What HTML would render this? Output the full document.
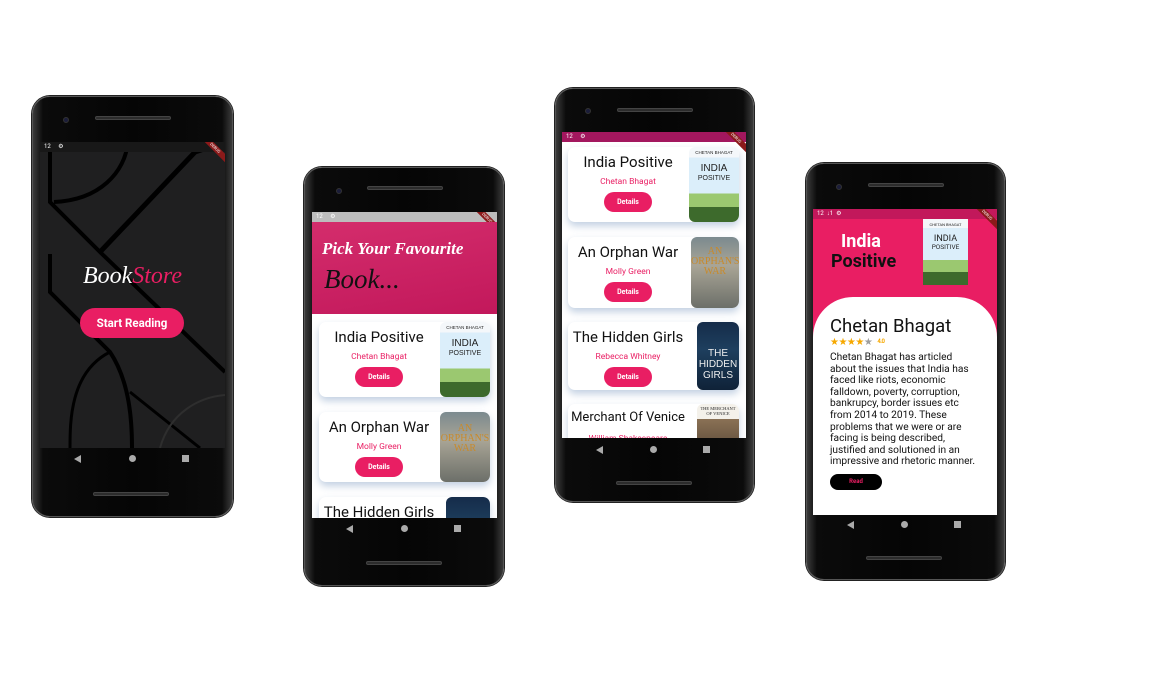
<!DOCTYPE html>
<html><head><meta charset="utf-8">
<style>
*{margin:0;padding:0;box-sizing:border-box}
body{width:1165px;height:675px;background:#fff;position:relative;overflow:hidden;font-family:"Roboto","Liberation Sans",sans-serif}
.ph{position:absolute;border-radius:18px;background:linear-gradient(90deg,#3a3a3a,#0b0b0b 5%,#050505 50%,#0b0b0b 95%,#3a3a3a);border:1.5px solid #555;box-shadow:0 0 0 1px #222}
.spk{position:absolute;height:4px;width:76px;border-radius:3px;background:#2c2c2c;border:1px solid #444}
.cam{position:absolute;width:6px;height:6px;border-radius:50%;background:#1b1d3a;border:1px solid #333}
.scr{position:absolute;overflow:hidden;background:#fff}
.sb{position:absolute;left:0;top:0;width:100%;height:10px;font-size:6px;color:#fff;padding-left:4px;line-height:10px}
.dbg{position:absolute;right:-9px;top:3px;width:38px;height:6px;background:#8b1a1a;color:#fff;font-size:4px;text-align:center;line-height:6px;transform:rotate(45deg)}
.tri{position:absolute;width:0;height:0;border-top:4px solid transparent;border-bottom:4px solid transparent;border-right:7px solid #aaa}
.dot{position:absolute;width:7px;height:7px;border-radius:50%;background:#aaa}
.sq{position:absolute;width:7px;height:7px;background:#aaa}
.card{position:absolute;left:7px;width:171px;background:#fff;border-radius:7px;box-shadow:0 4px 8px rgba(120,150,190,.45);overflow:hidden}
.card .t{position:absolute;left:0;width:120px;text-align:center;font-size:15px;color:#111;top:6px;white-space:nowrap}
.card .a{position:absolute;left:0;width:120px;text-align:center;font-size:8.5px;color:#e91e63;top:30px;white-space:nowrap}
.card .b{position:absolute;left:36px;width:48px;height:20px;border-radius:10px;background:#e91e63;color:#fff;font-size:7px;font-weight:bold;text-align:center;line-height:20px;top:45px}
.card .im{position:absolute;right:0;top:0;bottom:0;width:50px;border-radius:6px;overflow:hidden}
.ip{background:linear-gradient(#f4f7fa 0 14%,#dbeefa 14% 62%,#9bc870 62% 80%,#3d6a2c 80%)}
.ow{background:linear-gradient(#7b8a8f,#a9a596 40%,#6c6f69)}
.hg{background:linear-gradient(#152c4a,#1e3f5e 40%,#0f2238)}
.mv{background:linear-gradient(#f4f1ea 0 25%,#8a7155 25% ,#4a3b2e)}
.im span{position:absolute;left:0;width:100%;text-align:center;color:#222;font-family:"Liberation Sans",sans-serif}
</style></head><body>

<!-- Phone 1 -->
<div class="ph" style="left:32px;top:96px;width:201px;height:421px"></div>
<div class="spk" style="left:95px;top:116px"></div>
<div class="cam" style="left:63px;top:117px"></div>
<div class="spk" style="left:93px;top:492px"></div>
<div class="scr" style="left:40px;top:142px;width:185px;height:306px;background:#1f1f20">
<svg width="185" height="306" style="position:absolute;left:0;top:0">
<path d="M88 0 C85 30 60 58 14 60" stroke="#000" stroke-width="4" fill="none"/>
<path d="M10 0 L10 60 L60 110 L185 230" stroke="#000" stroke-width="4" fill="none"/>
<path d="M60 110 L155 10 L185 0" stroke="#000" stroke-width="5" fill="none"/>
<path d="M10 112 L10 150 L70 210 C90 240 92 280 92 306" stroke="#000" stroke-width="4" fill="none"/>
<path d="M70 210 C30 230 30 280 30 306" stroke="#000" stroke-width="3" fill="none"/>
<path d="M90 250 L160 306" stroke="#000" stroke-width="3" fill="none"/>
<path d="M120 306 C130 270 160 255 185 253" stroke="#2e2e2e" stroke-width="2" fill="none"/>
</svg>
<div class="sb" style="background:#181818">12 &nbsp;&nbsp;&nbsp;&nbsp;⚙</div>
<div class="dbg">DEBUG</div>
<div style="position:absolute;left:0;width:185px;top:121px;text-align:center;font-family:'Liberation Serif',serif;font-style:italic;font-size:24px;color:#fff">Book<span style="color:#e91e63">Store</span></div>
<div style="position:absolute;left:40px;top:166px;width:104px;height:30px;border-radius:15px;background:#e91e63;color:#fff;font-size:11.5px;font-weight:bold;text-align:center;line-height:30px">Start Reading</div>
</div>
<div class="tri" style="left:74px;top:455px"></div><div class="dot" style="left:129px;top:455px"></div><div class="sq" style="left:182px;top:455px"></div>

<!-- Phone 2 -->
<div class="ph" style="left:304px;top:167px;width:200px;height:419px"></div>
<div class="spk" style="left:367px;top:186px"></div>
<div class="cam" style="left:336px;top:188px"></div>
<div class="spk" style="left:366px;top:561px"></div>
<div class="scr" style="left:312px;top:212px;width:185px;height:306px">
<div class="sb" style="background:#bdbdbd">12 &nbsp;&nbsp;&nbsp;&nbsp;⚙</div>
<div class="dbg">DEBUG</div>
<div style="position:absolute;left:0;top:10px;width:185px;height:92px;background:linear-gradient(170deg,#d42d6c,#c2185b)"></div>
<div style="position:absolute;left:10px;top:27px;font-family:'Liberation Serif',serif;font-style:italic;font-weight:bold;font-size:17px;color:#fff">Pick Your Favourite</div>
<div style="position:absolute;left:12px;top:52px;font-family:'Liberation Serif',serif;font-style:italic;font-size:27px;color:#111">Book...</div>
<div class="card" style="top:110px;height:75px"><div class="t">India Positive</div><div class="a">Chetan Bhagat</div><div class="b">Details</div><div class="im ip"><span style="top:3px;font-size:4.5px">CHETAN BHAGAT</span><span style="top:17px;font-size:10px;line-height:9px">INDIA<br><span style="font-size:7px;position:static">POSITIVE</span></span></div></div>
<div class="card" style="top:200px;height:70px"><div class="t">An Orphan War</div><div class="a">Molly Green</div><div class="b">Details</div><div class="im ow"><span style="top:12px;font-size:10px;color:#c98a2a;font-family:'Liberation Serif',serif;line-height:10px">AN<br>ORPHAN'S<br>WAR</span></div></div>
<div class="card" style="top:285px;height:70px"><div class="t">The Hidden Girls</div><div class="im hg" style="width:44px"></div></div>
</div>
<div class="tri" style="left:346px;top:525px"></div><div class="dot" style="left:401px;top:525px"></div><div class="sq" style="left:454px;top:525px"></div>

<!-- Phone 3 -->
<div class="ph" style="left:555px;top:88px;width:199px;height:414px"></div>
<div class="spk" style="left:617px;top:108px"></div>
<div class="cam" style="left:585px;top:108px"></div>
<div class="spk" style="left:616px;top:481px"></div>
<div class="scr" style="left:562px;top:132px;width:184px;height:306px">
<div class="sb" style="background:#a3175e">12 &nbsp;&nbsp;&nbsp;&nbsp;⚙</div>
<div class="dbg">DEBUG</div>
<div class="card" style="top:15px;height:75px;left:6px"><div class="t">India Positive</div><div class="a">Chetan Bhagat</div><div class="b">Details</div><div class="im ip"><span style="top:3px;font-size:4.5px">CHETAN BHAGAT</span><span style="top:17px;font-size:10px;line-height:9px">INDIA<br><span style="font-size:7px;position:static">POSITIVE</span></span></div></div>
<div class="card" style="top:105px;height:71px;left:6px"><div class="t">An Orphan War</div><div class="a">Molly Green</div><div class="b">Details</div><div class="im ow" style="width:48px"><span style="top:10px;font-size:10px;color:#c98a2a;font-family:'Liberation Serif',serif;line-height:10px">AN<br>ORPHAN'S<br>WAR</span></div></div>
<div class="card" style="top:190px;height:68px;left:6px"><div class="t">The Hidden Girls</div><div class="a">Rebecca Whitney</div><div class="b">Details</div><div class="im hg" style="width:42px"><span style="top:26px;font-size:10px;color:#eee;line-height:11px">THE<br>HIDDEN<br>GIRLS</span></div></div>
<div class="card" style="top:272px;height:60px;left:6px"><div class="t" style="font-size:13px">Merchant Of Venice</div><div class="a">William Shakespeare</div><div class="im mv" style="width:42px"><span style="top:2px;font-size:4.5px;font-family:'Liberation Serif',serif">THE MERCHANT<br>OF VENICE</span></div></div>
</div>
<div class="tri" style="left:596px;top:446px"></div><div class="dot" style="left:650px;top:446px"></div><div class="sq" style="left:703px;top:446px"></div>

<!-- Phone 4 -->
<div class="ph" style="left:806px;top:163px;width:199px;height:417px"></div>
<div class="spk" style="left:868px;top:183px"></div>
<div class="cam" style="left:836px;top:184px"></div>
<div class="spk" style="left:866px;top:556px"></div>
<div class="scr" style="left:813px;top:209px;width:184px;height:306px;background:#e91e63">
<div class="sb" style="background:#c2185b">12 &nbsp;↓1&nbsp;&nbsp;⚙</div>
<div class="dbg">DEBUG</div>
<div style="position:absolute;left:28px;top:22px;font-size:18px;font-weight:bold;color:#fff">India</div>
<div style="position:absolute;left:18px;top:42px;font-size:18px;font-weight:bold;color:#111">Positive</div>
<div class="ip" style="position:absolute;left:110px;top:10px;width:45px;height:66px"><span style="position:absolute;top:3px;width:100%;text-align:center;font-size:4px;color:#222">CHETAN BHAGAT</span><span style="position:absolute;top:16px;width:100%;text-align:center;font-size:9px;line-height:8px;color:#222">INDIA<br><span style="font-size:6.5px">POSITIVE</span></span></div>
<div style="position:absolute;left:0;top:88px;width:184px;height:230px;background:#fff;border-radius:40px 40px 0 0"></div>
<div style="position:absolute;left:17px;top:106px;font-size:18.5px;color:#111">Chetan Bhagat</div>
<div style="position:absolute;left:17px;top:128px;font-size:10px;line-height:10px;color:#f6a800;letter-spacing:-0.5px">★★★★<span style="color:#9e9e9e">★</span> <span style="font-size:6px;font-weight:bold;margin-left:3px;vertical-align:2px">4.0</span></div>
<div style="position:absolute;left:17px;top:143px;width:148px;font-size:10.2px;line-height:11.6px;color:#111">Chetan Bhagat has articled about the issues that India has faced like riots, economic falldown, poverty, corruption, bankrupcy, border issues etc from 2014 to 2019. These problems that we were or are facing is being described, justified and solutioned in an impressive and rhetoric manner.</div>
<div style="position:absolute;left:17px;top:265px;width:52px;height:16px;border-radius:8px;background:#000;color:#e91e63;font-size:6px;font-weight:bold;text-align:center;line-height:16px">Read</div>
</div>
<div class="tri" style="left:847px;top:521px"></div><div class="dot" style="left:901px;top:521px"></div><div class="sq" style="left:954px;top:521px"></div>

</body></html>
